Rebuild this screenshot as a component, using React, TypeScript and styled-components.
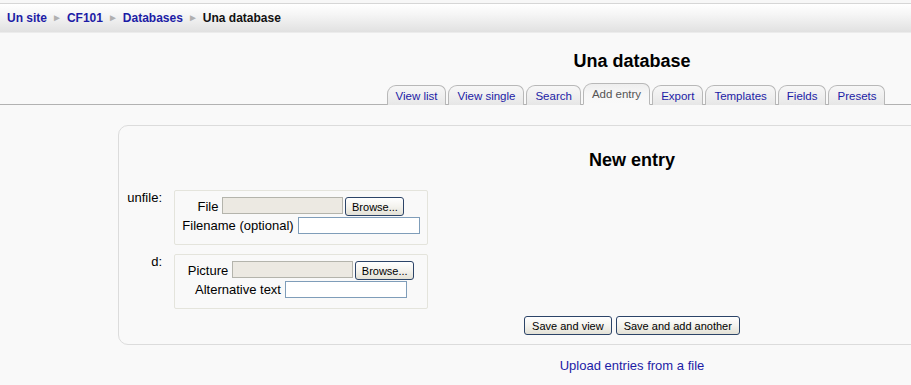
import React from 'react'
import styled, { createGlobalStyle } from 'styled-components'

const GlobalStyle = createGlobalStyle`
  html, body {
    margin: 0;
    padding: 0;
    background: #f9f9f9;
    overflow: hidden;
  }
  body {
    font-family: 'Liberation Sans', Arial, sans-serif;
    font-size: 13px;
    color: #000;
  }
`

const Page = styled.div`
  width: 1264px;
  display: flex;
  flex-direction: column;
`

const TopRule = styled.div`
  height: 3px;
  background: #f7f7f7;
  border-bottom: 1px solid #d6d6d6;
`

const NavBar = styled.div`
  height: 28px;
  display: flex;
  align-items: center;
  padding-left: 7px;
  background: linear-gradient(to bottom, #ffffff 0%, #f6f6f6 35%, #e1e1e1 100%);
  border-bottom: 1px solid #ececec;
`

const Crumb = styled.a<{ $current?: boolean }>`
  font-size: 12px;
  font-weight: bold;
  color: ${({ $current }) => ($current ? '#111' : '#1c1ca6')};
  text-decoration: none;
`

const Sep = styled.span`
  font-size: 10px;
  color: #b0b0b0;
  margin: 0 5px;
  line-height: 1;
`

const Heading = styled.h2`
  margin: 17px 0 0;
  font-size: 18px;
  line-height: 22px;
  font-weight: bold;
  text-align: center;
`

const TabBar = styled.div`
  margin-top: 11px;
  display: flex;
  justify-content: center;
  gap: 2px;
  border-bottom: 1px solid #b2b2b2;
  padding-left: 8px;
`

const Tab = styled.a<{ $active?: boolean }>`
  display: flex;
  align-items: center;
  padding: 0 8px;
  margin-bottom: -1px;
  font-size: 11.5px;
  text-decoration: none;
  border: 1px solid #b8b8b8;
  border-bottom: ${({ $active }) => ($active ? '1px solid #f9f9f9' : 'none')};
  border-radius: 9px 7px 0 0;
  color: ${({ $active }) => ($active ? '#555' : '#1c1ca6')};
  background: ${({ $active }) =>
    $active
      ? 'linear-gradient(to bottom, #eeeeee 0%, #f7f7f7 50%, #f9f9f9 100%)'
      : 'linear-gradient(to bottom, #f7f7f7 0%, #eeeeee 60%, #e6e6e6 100%)'};
  height: ${({ $active }) => ($active ? '20px' : '19px')};
  align-self: flex-end;
`

const MainBox = styled.div`
  margin: 20px 118px 0;
  border: 1px solid #dcdcdc;
  border-radius: 10px;
  padding: 23px 0 9px;
  display: flex;
  flex-direction: column;
`

const FormTitle = styled.h3`
  margin: 0 0 19px;
  font-size: 18px;
  line-height: 22px;
  font-weight: bold;
  text-align: center;
`

const FieldRow = styled.div`
  display: flex;
  align-items: flex-start;
  margin-bottom: 9px;
`

const FieldLabel = styled.div`
  width: 43px;
  margin-right: 12px;
  text-align: right;
  line-height: 16px;
`

const FieldBox = styled.div`
  width: 252px;
  border: 1px solid #e4e4dc;
  border-radius: 2px;
  padding: 6px 0 9px;
  display: flex;
  flex-direction: column;
  align-items: center;
`

const Line = styled.div`
  height: 19px;
  display: flex;
  align-items: center;
  gap: 4px;
`

const InputPair = styled.div`
  display: flex;
  align-items: flex-start;
  gap: 2px;
`

const TextInput = styled.input<{ $disabled?: boolean }>`
  box-sizing: border-box;
  width: ${({ $disabled }) => ($disabled ? '121px' : '122px')};
  height: 17px;
  margin: 0;
  padding: 0 2px;
  font: inherit;
  border: 1px solid ${({ $disabled }) => ($disabled ? '#b4b4ac' : '#7f9db9')};
  background: ${({ $disabled }) => ($disabled ? '#ece9e2' : '#fff')};
`

const XpButton = styled.button`
  box-sizing: border-box;
  height: 19px;
  margin: 0;
  padding: 0 7px;
  font-family: 'Liberation Sans', Arial, sans-serif;
  font-size: 11px;
  color: #000;
  border: 1px solid #2c4468;
  border-radius: 3px;
  background: linear-gradient(to bottom, #ffffff 0%, #f4f3ee 50%, #e3e1d6 100%);
  cursor: pointer;
`

const BrowseButton = styled(XpButton)`
  width: 59px;
  padding: 0;
`

const ButtonRow = styled.div`
  display: flex;
  justify-content: center;
  gap: 4px;
  margin-top: -2px;
`

const UploadLink = styled.a`
  margin-top: 13px;
  align-self: center;
  color: #1c1ca6;
  text-decoration: none;
  line-height: 16px;
`

export default function App() {
  const tabs = ['View list', 'View single', 'Search', 'Add entry', 'Export', 'Templates', 'Fields', 'Presets']
  return (
    <>
      <GlobalStyle />
      <Page>
        <TopRule />
        <NavBar>
          <Crumb href="#">Un site</Crumb>
          <Sep>►</Sep>
          <Crumb href="#">CF101</Crumb>
          <Sep>►</Sep>
          <Crumb href="#">Databases</Crumb>
          <Sep>►</Sep>
          <Crumb $current>Una database</Crumb>
        </NavBar>
        <Heading>Una database</Heading>
        <TabBar>
          {tabs.map((t) => (
            <Tab key={t} href="#" $active={t === 'Add entry'}>
              {t}
            </Tab>
          ))}
        </TabBar>
        <MainBox>
          <FormTitle>New entry</FormTitle>
          <FieldRow>
            <FieldLabel>unfile:</FieldLabel>
            <FieldBox>
              <Line>
                <span>File</span>
                <InputPair>
                  <TextInput $disabled readOnly />
                  <BrowseButton>Browse...</BrowseButton>
                </InputPair>
              </Line>
              <Line>
                <span>Filename (optional)</span>
                <TextInput />
              </Line>
            </FieldBox>
          </FieldRow>
          <FieldRow>
            <FieldLabel>d:</FieldLabel>
            <FieldBox>
              <Line>
                <span>Picture</span>
                <InputPair>
                  <TextInput $disabled readOnly />
                  <BrowseButton>Browse...</BrowseButton>
                </InputPair>
              </Line>
              <Line>
                <span>Alternative text</span>
                <TextInput />
              </Line>
            </FieldBox>
          </FieldRow>
          <ButtonRow>
            <XpButton>Save and view</XpButton>
            <XpButton>Save and add another</XpButton>
          </ButtonRow>
        </MainBox>
        <UploadLink href="#">Upload entries from a file</UploadLink>
      </Page>
    </>
  )
}
